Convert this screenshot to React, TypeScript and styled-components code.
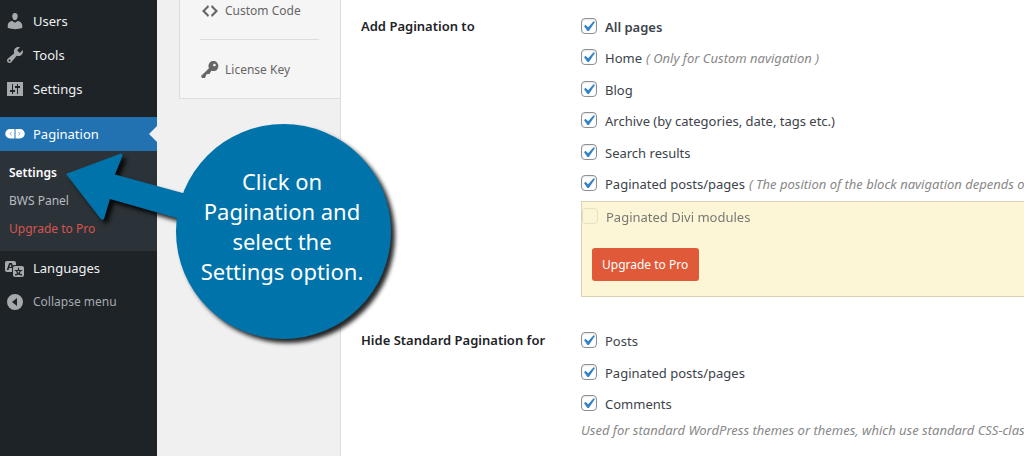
import React from "react";
import styled, { createGlobalStyle, css } from "styled-components";

const GlobalStyle = createGlobalStyle`
  * { box-sizing: border-box; }
  body {
    margin: 0;
    background: #f0f0f0;
    color: #3c434a;
    font-family: "Noto Sans", "Open Sans", sans-serif;
    font-size: 13px;
    line-height: 20px;
  }
`;

const Page = styled.div`
  position: relative;
  display: grid;
  grid-template-columns: 157px 184px minmax(0, 1fr);
  min-height: 100vh;
  overflow: hidden;
`;

/* ---------- Admin menu ---------- */

const AdminMenu = styled.nav`
  padding-top: 4px;
  background: #1d2327;
`;

const MenuList = styled.ul`
  margin: 0;
  padding: 0;
  list-style: none;
`;

const MenuItem = styled.li<{ $separated?: boolean }>`
  margin-top: ${(p) => (p.$separated ? 11 : 0)}px;
`;

const menuRow = css`
  position: relative;
  display: flex;
  align-items: center;
  gap: 8px;
  width: 100%;
  height: 34px;
  padding: 0 5px;
  border: 0;
  font: inherit;
  text-decoration: none;
`;

const MenuLink = styled.a<{ $active?: boolean }>`
  ${menuRow}
  background: ${(p) => (p.$active ? "#2271b1" : "transparent")};
  color: ${(p) => (p.$active ? "#fff" : "#f0f0f1")};
  svg { fill: ${(p) => (p.$active ? "#fff" : "#a7aaad")}; }
`;

const CollapseButton = styled.button`
  ${menuRow}
  background: transparent;
  color: #a7aaad;
  font-size: 12px;
  svg { fill: #a7aaad; }
`;

const Notch = styled.span`
  position: absolute;
  right: 0;
  top: 9px;
  border: 8px solid transparent;
  border-left-width: 0;
  border-right-color: #f0f0f0;
`;

const Submenu = styled.ul`
  margin: 0;
  padding: 8px 0;
  list-style: none;
  background: #2c3338;
`;

const SubmenuLink = styled.a<{ $tone?: "current" | "promo" }>`
  display: block;
  padding: 4px 9px;
  font-size: 12px;
  text-decoration: none;
  font-weight: ${(p) => (p.$tone === "current" ? 600 : 400)};
  color: ${(p) =>
    p.$tone === "current" ? "#fff" : p.$tone === "promo" ? "#d9534f" : "#b8bcc0"};
`;

/* ---------- Settings tabs ---------- */

const TabsColumn = styled.div`
  padding-left: 22px;
  border-right: 1px solid #ddd;
`;

const Tabs = styled.nav`
  padding: 0 21px 0 20px;
  border: solid #ddd;
  border-width: 0 0 1px 1px;
  background: #f5f5f5;
`;

const Tab = styled.a<{ $divided?: boolean }>`
  display: flex;
  align-items: center;
  gap: 5px;
  padding: ${(p) => (p.$divided ? "20px 0 18px" : "1px 0 18px")};
  border-top: ${(p) => (p.$divided ? "1px solid #ddd" : "0")};
  color: #666;
  font-size: 12px;
  text-decoration: none;
  svg { fill: #666; }
`;

/* ---------- Options form ---------- */

const Form = styled.form`
  display: flex;
  flex-direction: column;
  gap: 33px;
  padding: 16px 0 14px 20px;
  background: #fff;
  white-space: nowrap;
  overflow: hidden;
`;

const Group = styled.fieldset`
  display: grid;
  grid-template-columns: 220px minmax(0, 1fr);
  min-width: 0;
  margin: 0;
  padding: 0;
  border: 0;
`;

const GroupTitle = styled.div`
  color: #1d2327;
  font-weight: 600;
`;

const Options = styled.div<{ $height: number }>`
  display: flex;
  flex-direction: column;
  justify-content: space-between;
  min-height: ${(p) => p.$height}px;
  margin-top: 1px;
`;

const OptionLabel = styled.label<{ $strong?: boolean; $disabled?: boolean }>`
  display: flex;
  align-items: center;
  height: 20px;
  font-weight: ${(p) => (p.$strong ? 600 : 400)};
  opacity: ${(p) => (p.$disabled ? 0.7 : 1)};
`;

const Tick = styled.span`
  display: grid;
  flex: none;
  margin: 0 8px 2px 0;
  > * { grid-area: 1 / 1; place-self: start; }
  svg {
    position: relative;
    margin: -2px -3px -3px;
    fill: #3582c4;
    pointer-events: none;
  }
`;

const Checkbox = styled.input`
  appearance: none;
  width: 16px;
  height: 16px;
  margin: 0;
  border: 1px solid #8c8f94;
  border-radius: 4px;
  background: #fff;
  box-shadow: inset 0 1px 2px rgba(0, 0, 0, 0.1);
  &:disabled {
    background: transparent;
    border-color: #dcd8bc;
    box-shadow: none;
  }
`;

const Hint = styled.em`
  margin-left: 4px;
  color: #888;
`;

const Note = styled.p`
  margin: 6px 0 0;
  color: #888;
  font-style: italic;
`;

const ProPanel = styled.div`
  display: flex;
  flex-direction: column;
  align-items: flex-start;
  gap: 21px;
  margin-top: 7px;
  padding: 5px 0 15px;
  border: solid #d7d3b4;
  border-width: 1px 0 1px 1px;
  background: #fcf6d6;
`;

const UpgradeButton = styled.button`
  height: 33px;
  margin-left: 10px;
  padding: 0 11px 0 10px;
  border: 0;
  border-radius: 3px;
  background: #e05938;
  color: #fff;
  font: inherit;
  font-size: 12px;
`;

/* ---------- Walkthrough callout ---------- */

const Callout = styled.div`
  position: absolute;
  left: 60px;
  top: 118px;
  width: 340px;
  height: 232px;
  pointer-events: none;
`;

const CalloutShape = styled.svg`
  display: block;
  overflow: visible;
  filter: drop-shadow(4px 4px 2px rgba(0, 0, 0, 0.85));
`;

const CalloutText = styled.p`
  position: absolute;
  left: 116px;
  top: 48px;
  width: 212px;
  margin: 0;
  color: #fff;
  font-size: 22px;
  line-height: 30px;
  text-align: center;
`;

/* ---------- Icons ---------- */

const icons = {
  users:
    "M10 9.25c-2.27 0-2.73-3.44-2.73-3.44C7 4.02 7.82 2 9.97 2c2.16 0 2.98 2.02 2.71 3.81 0 0-.41 3.44-2.68 3.44zm0 2.57L12.72 10c2.39 0 4.52 2.33 4.52 4.53v2.49s-3.65 1.13-7.24 1.13c-3.65 0-7.24-1.13-7.24-1.13v-2.49c0-2.25 1.94-4.48 4.47-4.48z",
  tools:
    "M16.68 9.77c-1.34 1.34-3.3 1.67-4.95.99l-5.41 6.52c-.99.99-2.59.99-3.58 0s-.99-2.59 0-3.57l6.52-5.42c-.68-1.65-.35-3.61.99-4.95 1.28-1.28 3.12-1.62 4.72-1.06l-2.89 2.89 2.82 2.82 2.86-2.87c.53 1.58.18 3.39-1.08 4.65zM3.81 16.21c.4.39 1.04.39 1.43 0 .4-.4.4-1.04 0-1.43-.39-.4-1.03-.4-1.43 0-.39.39-.39 1.03 0 1.43z",
  settings:
    "M18 3v14H2V3h16zM8 11V5H7v6H5v2h2v2h1v-2h2v-2H8zm5-4V5h-1v2h-2v2h2v6h1V9h2V7h-2z",
  languages:
    "M11 7H9.49c-.63 0-1.25.3-1.59.7L7 5H4.13l-2.39 7h1.69l.74-2H7v4H2c-1.1 0-2-.9-2-2V5c0-1.1.9-2 2-2h7c1.1 0 2 .9 2 2v2zM6.51 9H4.49l1-2.93zM10 8h7c1.1 0 2 .9 2 2v7c0 1.1-.9 2-2 2h-7c-1.1 0-2-.9-2-2v-7c0-1.1.9-2 2-2zm7.25 5v-1.08h-3.17V9.75h-1.16v2.17H9.75V13h1.28c.11.85.56 1.85 1.28 2.62-.87.36-1.89.62-2.31.62-.01.02.22.97.2 1.46.84 0 2.21-.5 3.28-1.15 1.09.65 2.48 1.15 3.34 1.15-.02-.49.2-1.44.2-1.46-.43 0-1.49-.27-2.38-.63.7-.77 1.14-1.77 1.25-2.61h1.36zm-3.81 1.93c-.5-.46-.85-1.13-1.01-1.93h2.09c-.17.8-.51 1.47-1 1.93l-.04.03s-.03-.02-.04-.03z",
  collapse: "M10 2a8 8 0 1 0 0 16 8 8 0 0 0 0-16zm2 4v8l-5-4z",
  code: "M9 6l-4 4 4 4-1 2-6-6 6-6zm2 8l4-4-4-4 1-2 6 6-6 6z",
  key: "M16.95 2.58c1.96 1.95 1.96 5.12 0 7.07-1.51 1.51-3.75 1.84-5.59 1.01l-1.87 3.31-2.99.31L5 18H2l-1-2 7.95-7.69c-.92-1.87-.62-4.18.93-5.73 1.95-1.96 5.12-1.96 7.07 0zm-2.51 3.79c.74 0 1.33-.6 1.33-1.34 0-.73-.59-1.33-1.33-1.33-.73 0-1.33.6-1.33 1.33 0 .74.6 1.34 1.33 1.34z",
  check: "M14.83 4.89l1.34.94-5.81 8.38H9.02L5.78 9.67l1.34-1.25 2.57 2.4z",
};

function Icon({ name, size = 20 }: { name: keyof typeof icons; size?: number }) {
  return (
    <svg width={size} height={size} viewBox="0 0 20 20" aria-hidden="true">
      <path fillRule="evenodd" d={icons[name]} />
    </svg>
  );
}

function PaginationIcon() {
  return (
    <svg width="20" height="20" viewBox="0 0 20 20" aria-hidden="true">
      <path d="M9.5 5H5a4.5 4.5 0 0 0 0 9.500h4.500z" />
      <path d="M10.500 5H15a4.500 4.500 0 0 1 0 9.500h-4.500z" />
      <path
        d="M6.500 8L5 9.750l1.500 1.750M13.500 8L15 9.750l-1.500 1.750"
        style={{ fill: "none" }}
        stroke="#7fb0da"
      />
    </svg>
  );
}

/* ---------- Parts ---------- */

interface OptionProps {
  text: string;
  hint?: string;
  strong?: boolean;
  disabled?: boolean;
}

function Option({ text, hint, strong, disabled }: OptionProps) {
  const [checked, setChecked] = React.useState(!disabled);
  return (
    <OptionLabel $strong={strong} $disabled={disabled}>
      <Tick>
        <Checkbox
          type="checkbox"
          checked={checked}
          disabled={disabled}
          onChange={(e) => setChecked(e.target.checked)}
        />
        {checked && <Icon name="check" size={21} />}
      </Tick>
      {text}
      {hint && <Hint>{hint}</Hint>}
    </OptionLabel>
  );
}

export default function App() {
  return (
    <Page>
      <GlobalStyle />
      <AdminMenu aria-label="Admin menu">
        <MenuList>
          <MenuItem>
            <MenuLink href="#users"><Icon name="users" />Users</MenuLink>
          </MenuItem>
          <MenuItem>
            <MenuLink href="#tools"><Icon name="tools" />Tools</MenuLink>
          </MenuItem>
          <MenuItem>
            <MenuLink href="#settings"><Icon name="settings" />Settings</MenuLink>
          </MenuItem>
          <MenuItem $separated>
            <MenuLink href="#pagination" $active>
              <PaginationIcon />Pagination<Notch />
            </MenuLink>
            <Submenu>
              <li><SubmenuLink href="#pagination-settings" $tone="current">Settings</SubmenuLink></li>
              <li><SubmenuLink href="#bws-panel">BWS Panel</SubmenuLink></li>
              <li><SubmenuLink href="#upgrade" $tone="promo">Upgrade to Pro</SubmenuLink></li>
            </Submenu>
          </MenuItem>
          <MenuItem>
            <MenuLink href="#languages"><Icon name="languages" />Languages</MenuLink>
          </MenuItem>
          <MenuItem>
            <CollapseButton type="button"><Icon name="collapse" />Collapse menu</CollapseButton>
          </MenuItem>
        </MenuList>
      </AdminMenu>

      <TabsColumn>
        <Tabs aria-label="Settings sections">
          <Tab href="#custom-code"><Icon name="code" />Custom Code</Tab>
          <Tab href="#license-key" $divided><Icon name="key" />License Key</Tab>
        </Tabs>
      </TabsColumn>

      <Form>
        <Group aria-labelledby="add-title">
          <GroupTitle id="add-title">Add Pagination to</GroupTitle>
          <div>
            <Options $height={177}>
              <Option text="All pages" strong />
              <Option text="Home" hint="( Only for Custom navigation )" />
              <Option text="Blog" />
              <Option text="Archive (by categories, date, tags etc.)" />
              <Option text="Search results" />
              <Option
                text="Paginated posts/pages"
                hint="( The position of the block navigation depends on"
              />
            </Options>
            <ProPanel>
              <Option text="Paginated Divi modules" disabled />
              <UpgradeButton type="button">Upgrade to Pro</UpgradeButton>
            </ProPanel>
          </div>
        </Group>

        <Group aria-labelledby="hide-title">
          <GroupTitle id="hide-title">Hide Standard Pagination for</GroupTitle>
          <div>
            <Options $height={83}>
              <Option text="Posts" />
              <Option text="Paginated posts/pages" />
              <Option text="Comments" />
            </Options>
            <Note>Used for standard WordPress themes or themes, which use standard CSS-classes</Note>
          </div>
        </Group>
      </Form>

      <Callout role="note">
        <CalloutShape width="340" height="232" viewBox="60 118 340 232" fill="#0073aa" aria-hidden="true">
          <path d="M66 174L121 153.500Q123 154 122 157L115 174.500L190 195L180 219L110 199L104 219Q102 221 100 218Z" />
          <circle cx="283.500" cy="231.500" r="107.500" />
        </CalloutShape>
        <CalloutText>
          Click on
          <br />
          Pagination and
          <br />
          select the
          <br />
          Settings option.
        </CalloutText>
      </Callout>
    </Page>
  );
}
